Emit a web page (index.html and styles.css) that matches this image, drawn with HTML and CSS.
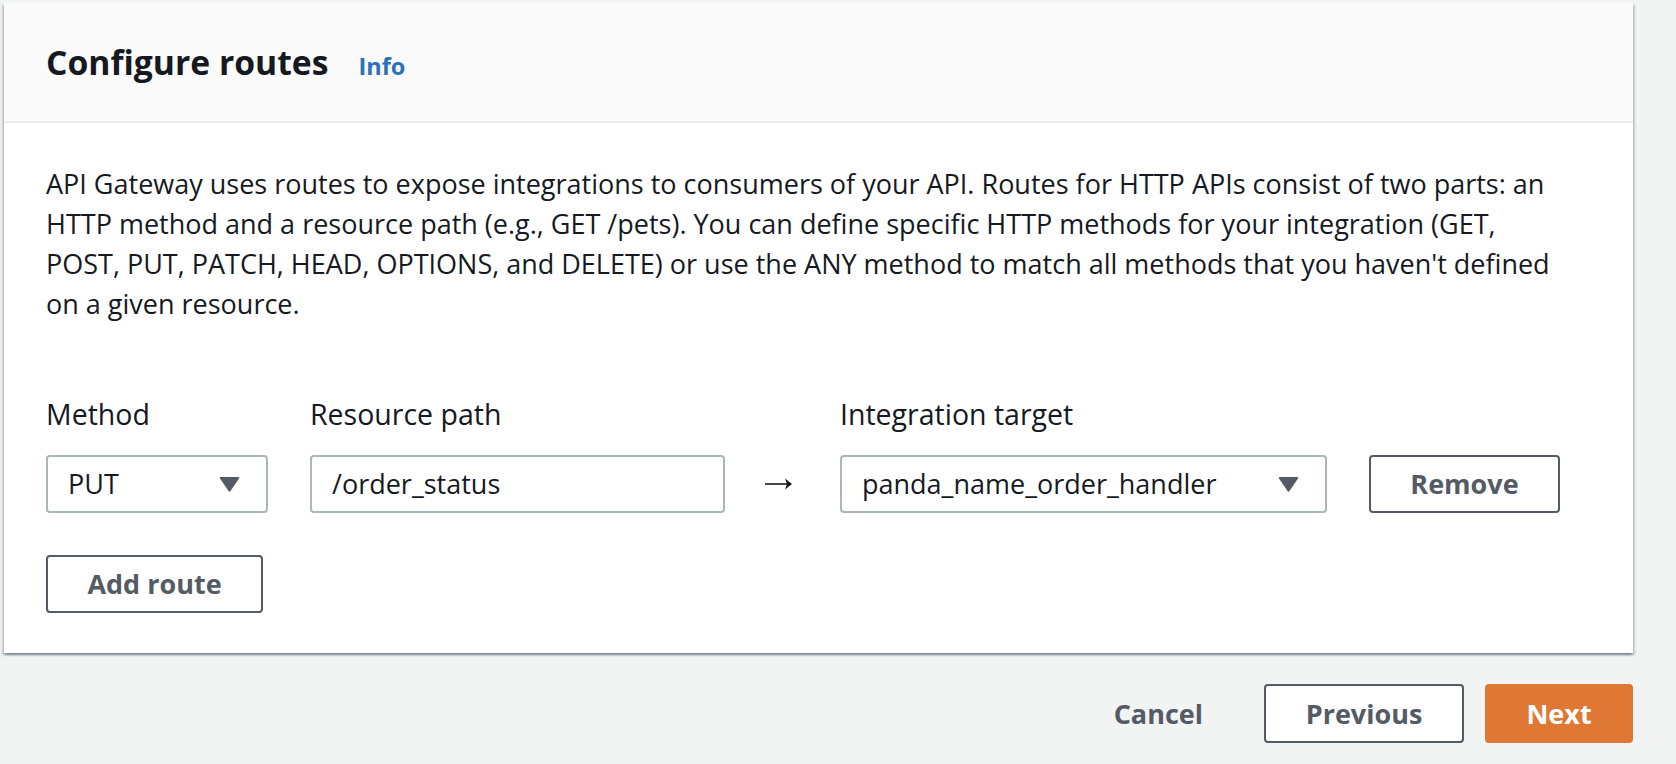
FILE: index.html
```html
<!DOCTYPE html>
<html lang="en">
<head>
<meta charset="utf-8">
<title>Configure routes</title>
<link rel="stylesheet" href="styles.css">
</head>
<body>
<div class="page">
  <section class="card">
    <header class="card-header">
      <h2 class="card-title">Configure routes</h2>
      <a class="info-link" href="#">Info</a>
    </header>
    <div class="card-body">
      <p class="desc">API Gateway uses routes to expose integrations to consumers of your API. Routes for HTTP APIs consist of two parts: an<br>HTTP method and a resource path (e.g., GET /pets). You can define specific HTTP methods for your integration (GET,<br>POST, PUT, PATCH, HEAD, OPTIONS, and DELETE) or use the ANY method to match all methods that you haven't defined<br>on a given resource.</p>
      <div class="route-grid">
        <div class="field-label">Method</div>
        <div class="field-label">Resource path</div>
        <div></div>
        <div class="field-label">Integration target</div>
        <div></div>

        <div class="select">
          <span class="select-value">PUT</span>
          <svg class="caret" width="21" height="15" viewBox="0 0 21 15"><path d="M1 1.5 Q0 0 2 0 H19 Q21 0 20 1.5 L11.5 14 Q10.5 15.5 9.5 14 Z" fill="#545b64"/></svg>
        </div>
        <div class="input">/order_status</div>
        <div class="arrow">
          <svg width="28" height="14" viewBox="0 0 28 14"><path d="M0 7 H25" stroke="#16191f" stroke-width="1.6" fill="none"/><path d="M20 1.5 L27 7 L20 12.5 L22 7 Z" fill="#16191f"/></svg>
        </div>
        <div class="select">
          <span class="select-value">panda_name_order_handler</span>
          <svg class="caret" width="21" height="15" viewBox="0 0 21 15"><path d="M1 1.5 Q0 0 2 0 H19 Q21 0 20 1.5 L11.5 14 Q10.5 15.5 9.5 14 Z" fill="#545b64"/></svg>
        </div>
        <button class="btn btn-normal btn-remove" type="button">Remove</button>
      </div>
      <button class="btn btn-normal btn-add" type="button">Add route</button>
    </div>
  </section>
  <div class="actions">
    <button class="btn btn-link" type="button">Cancel</button>
    <button class="btn btn-normal btn-prev" type="button">Previous</button>
    <button class="btn btn-primary" type="button">Next</button>
  </div>
</div>
</body>
</html>
```

FILE: styles.css
```css
* { box-sizing: border-box; }

html, body {
  margin: 0;
  padding: 0;
  background: #f2f3f3;
}

body {
  font-family: "Open Sans", "Liberation Sans", sans-serif;
  color: #16191f;
  font-size: 27px;
  line-height: 40px;
}

.page {
  padding: 3px 43px 0 4px;
}

.card {
  background: #ffffff;
  box-shadow: 0 2px 2px 0 rgba(0, 28, 36, 0.3), 2px 2px 2px 0 rgba(0, 28, 36, 0.15), -2px 2px 2px 0 rgba(0, 28, 36, 0.15);
}

.card-header {
  background: #fafafa;
  border-bottom: 2px solid #eaeded;
  padding: 37px 42px 35px 42px;
  display: flex;
  align-items: baseline;
  gap: 30px;
}

.card-title {
  margin: 0;
  font-size: 33.7px;
  line-height: 44px;
  font-weight: 700;
  color: #16191f;
}

.info-link {
  font-size: 23.5px;
  font-weight: 700;
  color: #2a72b9;
  text-decoration: none;
}

.card-body {
  padding: 41px 42px 40px 42px;
}

.desc {
  margin: 0;
  white-space: nowrap;
}

.route-grid {
  margin-top: 70px;
  display: grid;
  grid-template-columns: 222px 415px 31px 487px 191px;
  column-gap: 42px;
  row-gap: 21px;
  align-items: center;
}

.field-label {
  font-size: 28.5px;
  line-height: 40px;
  color: #16191f;
  white-space: nowrap;
}

.select,
.input {
  height: 58px;
  border: 2px solid #aab7b8;
  border-radius: 4px;
  background: #ffffff;
  display: flex;
  align-items: center;
  padding: 0 26px 0 20px;
  color: #16191f;
  font-size: 27px;
  white-space: nowrap;
}

.select {
  justify-content: space-between;
}

.caret {
  display: block;
  flex: none;
}

.arrow {
  display: flex;
  align-items: center;
  margin-left: -2px;
}

.arrow svg {
  display: block;
}

.btn {
  font-family: "Open Sans", "Liberation Sans", sans-serif;
  font-weight: 700;
  font-size: 27px;
  line-height: 40px;
  cursor: pointer;
  border-radius: 4px;
  height: 59px;
  padding: 0 38px;
  display: inline-flex;
  align-items: center;
  justify-content: center;
}

.btn-normal {
  background: #ffffff;
  border: 2px solid #545b64;
  color: #545b64;
}

.btn-remove {
  height: 58px;
  width: 191px;
}

.btn-add {
  margin-top: 42px;
  height: 58px;
  width: 217px;
}

.btn-link {
  background: transparent;
  border: 2px solid transparent;
  color: #545b64;
}

.btn-prev {
  width: 200px;
}

.btn-primary {
  background: #de7834;
  border: 2px solid #de7834;
  color: #ffffff;
  width: 148px;
}

.actions {
  margin-top: 31px;
  display: flex;
  justify-content: flex-end;
  gap: 21px;
}
```
